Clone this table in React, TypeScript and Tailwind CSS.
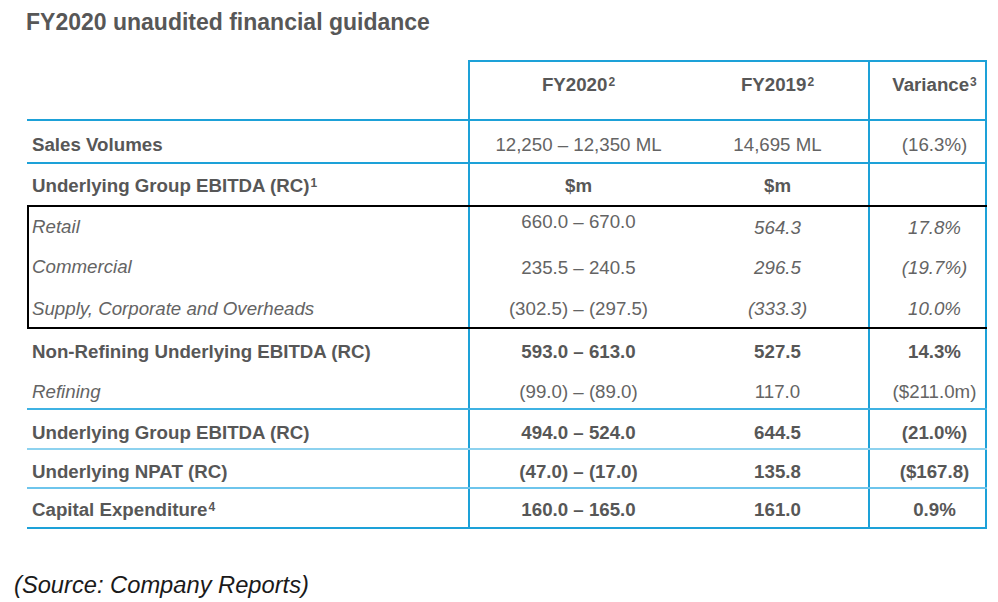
import React from "react";

const grid = "grid grid-cols-[441px_219px_181px_119px]";
const lab = "flex items-center pl-[5px]";
const labBox = "flex items-center pl-[3px] border-l-2 border-black";
const c2 = "flex items-center justify-center border-l-2 border-[#1da1d8]";
const c3 = "flex items-center justify-center";
const c4 = "flex items-center justify-center pl-[14px] border-x-2 border-[#1da1d8]";

const bold = "font-bold text-[#575757]";
const reg = "text-[#646464]";
const ital = "italic text-[#646464]";

function Sup({ children }: { children: React.ReactNode }) {
  return <sup className="text-[12px] top-[-5px] ml-[1px] font-bold">{children}</sup>;
}

export default function App() {
  return (
    <div className="w-[998px] h-[602px] bg-white font-['Liberation_Sans',Arial,sans-serif] overflow-hidden">
      <div className="pt-[8px] pl-[26px] text-[23px] leading-[28px] font-bold text-[#575757]">
        FY2020 unaudited financial guidance
      </div>

      <div className="mt-[24px] ml-[27px] w-[960px] text-[18.7px] leading-[22px]">
        {/* Header */}
        <div className={`${grid} h-[61px] border-b-2 border-[#1da1d8]`}>
          <div className="border-t-2 border-transparent" />
          <div className={`${c2} border-t-2 pb-[11px] ${bold}`}>
            <span>
              FY2020<Sup>2</Sup>
            </span>
          </div>
          <div className={`${c3} border-t-2 border-[#1da1d8] pb-[11px] ${bold}`}>
            <span>
              FY2019<Sup>2</Sup>
            </span>
          </div>
          <div className={`${c4} border-t-2 pb-[11px] ${bold}`}>
            <span>
              Variance<Sup>3</Sup>
            </span>
          </div>
        </div>

        {/* Sales Volumes */}
        <div className={`${grid} h-[43px] border-b-2 border-[#1da1d8]`}>
          <div className={`${lab} pt-[6px] ${bold}`}>Sales Volumes</div>
          <div className={`${c2} pt-[6px] ${reg}`}>12,250 – 12,350 ML</div>
          <div className={`${c3} pt-[6px] ${reg}`}>14,695 ML</div>
          <div className={`${c4} pt-[6px] ${reg}`}>(16.3%)</div>
        </div>

        {/* Underlying Group EBITDA (RC)1 */}
        <div className={`${grid} h-[43px] border-b-2 border-black`}>
          <div className={`${lab} pt-[3px] ${bold}`}>
            <span>
              Underlying Group EBITDA (RC)<Sup>1</Sup>
            </span>
          </div>
          <div className={`${c2} pt-[3px] ${bold}`}>$m</div>
          <div className={`${c3} pt-[3px] ${bold}`}>$m</div>
          <div className={`${c4} pt-[3px] ${bold}`}></div>
        </div>

        {/* Retail */}
        <div className={`${grid} h-[40px]`}>
          <div className={`${labBox} ${ital}`}>Retail</div>
          <div className={`${c2} pb-[10px] ${reg}`}>660.0 – 670.0</div>
          <div className={`${c3} pt-[2px] ${ital}`}>564.3</div>
          <div className={`${c4} pt-[2px] ${ital}`}>17.8%</div>
        </div>

        {/* Commercial */}
        <div className={`${grid} h-[40px]`}>
          <div className={`${labBox} ${ital}`}>Commercial</div>
          <div className={`${c2} pt-[1px] ${reg}`}>235.5 – 240.5</div>
          <div className={`${c3} pt-[1px] ${ital}`}>296.5</div>
          <div className={`${c4} pt-[1px] ${ital}`}>(19.7%)</div>
        </div>

        {/* Supply */}
        <div className={`${grid} h-[42px] border-b-2 border-black`}>
          <div className={`${labBox} pt-[4px] ${ital}`}>Supply, Corporate and Overheads</div>
          <div className={`${c2} pt-[4px] ${reg}`}>(302.5) – (297.5)</div>
          <div className={`${c3} pt-[4px] ${ital}`}>(333.3)</div>
          <div className={`${c4} pt-[4px] ${ital}`}>10.0%</div>
        </div>

        {/* Non-Refining */}
        <div className={`${grid} h-[41px]`}>
          <div className={`${lab} pt-[4px] ${bold}`}>Non-Refining Underlying EBITDA (RC)</div>
          <div className={`${c2} pt-[4px] ${bold}`}>593.0 – 613.0</div>
          <div className={`${c3} pt-[4px] ${bold}`}>527.5</div>
          <div className={`${c4} pt-[4px] ${bold}`}>14.3%</div>
        </div>

        {/* Refining */}
        <div className={`${grid} h-[40px] border-b-2 border-[#3fb2e3]`}>
          <div className={`${lab} pt-[6px] ${ital}`}>Refining</div>
          <div className={`${c2} pt-[6px] ${reg}`}>(99.0) – (89.0)</div>
          <div className={`${c3} pt-[6px] ${reg}`}>117.0</div>
          <div className={`${c4} pt-[6px] ${reg}`}>($211.0m)</div>
        </div>

        {/* Underlying Group EBITDA (RC) */}
        <div className={`${grid} h-[40px] border-b-2 border-[#8dd2ef]`}>
          <div className={`${lab} pt-[7px] ${bold}`}>Underlying Group EBITDA (RC)</div>
          <div className={`${c2} pt-[7px] ${bold}`}>494.0 – 524.0</div>
          <div className={`${c3} pt-[7px] ${bold}`}>644.5</div>
          <div className={`${c4} pt-[7px] ${bold}`}>(21.0%)</div>
        </div>

        {/* NPAT */}
        <div className={`${grid} h-[39px] border-b-2 border-[#6ec5ec]`}>
          <div className={`${lab} pt-[6px] ${bold}`}>Underlying NPAT (RC)</div>
          <div className={`${c2} pt-[6px] ${bold}`}>(47.0) – (17.0)</div>
          <div className={`${c3} pt-[6px] ${bold}`}>135.8</div>
          <div className={`${c4} pt-[6px] ${bold}`}>($167.8)</div>
        </div>

        {/* Capital Expenditure */}
        <div className={`${grid} h-[40px] border-b-2 border-[#1da1d8]`}>
          <div className={`${lab} pt-[4px] ${bold}`}>
            <span>
              Capital Expenditure<Sup>4</Sup>
            </span>
          </div>
          <div className={`${c2} pt-[4px] ${bold}`}>160.0 – 165.0</div>
          <div className={`${c3} pt-[4px] ${bold}`}>161.0</div>
          <div className={`${c4} pt-[4px] ${bold}`}>0.9%</div>
        </div>
      </div>

      <div className="mt-[42px] pl-[14px] text-[23.7px] leading-[28px] italic text-[#1a1a1a]">
        (Source: Company Reports)
      </div>
    </div>
  );
}
